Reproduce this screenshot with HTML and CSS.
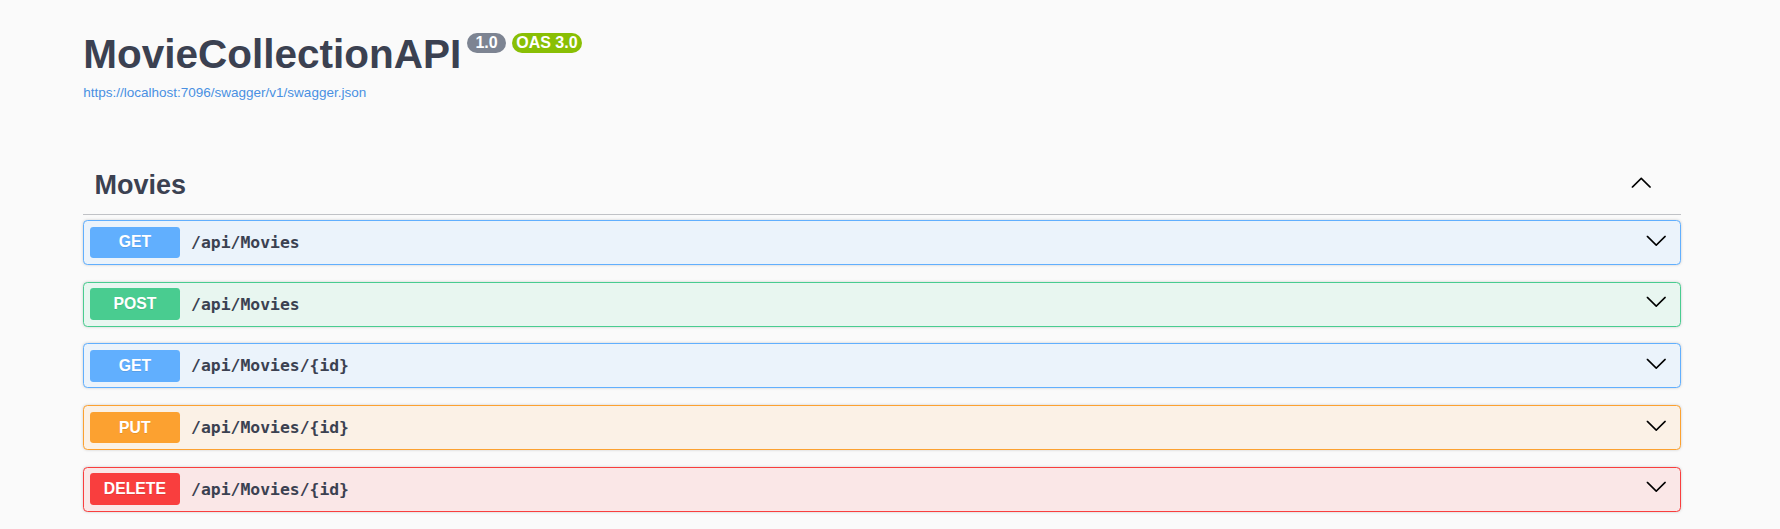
FILE: index.html
```html
<!DOCTYPE html>
<html lang="en">
<head>
<meta charset="utf-8">
<title>MovieCollectionAPI</title>
<link rel="stylesheet" href="styles.css">
</head>
<body>
<div class="page">
  <div class="wrapper">
    <section class="info">
      <div class="title-row">
        <h1 class="title">MovieCollectionAPI</h1>
        <span class="pill pill-version">1.0</span>
        <span class="pill pill-oas">OAS 3.0</span>
      </div>
      <a class="url" href="#">https://localhost:7096/swagger/v1/swagger.json</a>
    </section>

    <section class="tag-section">
      <div class="tag-row">
        <h3 class="tag-name">Movies</h3>
        <svg class="tag-arrow" viewBox="0 0 20 20" aria-hidden="true"><path transform="rotate(180 10 10)" d="M17.418 6.109c.272-.268.709-.268.979 0s.271.701 0 .969l-7.908 7.83c-.27.268-.707.268-.979 0l-7.908-7.83c-.27-.268-.27-.701 0-.969.271-.268.709-.268.979 0L10 13.25l7.418-7.141z"/></svg>
      </div>

      <div class="opblock op-get">
        <div class="summary">
          <span class="method">GET</span>
          <span class="path">/api/Movies</span>
          <svg class="op-arrow" viewBox="0 0 20 20" aria-hidden="true"><path d="M17.418 6.109c.272-.268.709-.268.979 0s.271.701 0 .969l-7.908 7.83c-.27.268-.707.268-.979 0l-7.908-7.830c-.27-.268-.27-.701 0-.969.271-.268.709-.268.979 0L10 13.25l7.418-7.141z"/></svg>
        </div>
      </div>

      <div class="opblock op-post">
        <div class="summary">
          <span class="method">POST</span>
          <span class="path">/api/Movies</span>
          <svg class="op-arrow" viewBox="0 0 20 20" aria-hidden="true"><path d="M17.418 6.109c.272-.268.709-.268.979 0s.271.701 0 .969l-7.908 7.83c-.27.268-.707.268-.979 0l-7.908-7.83c-.27-.268-.27-.701 0-.969.271-.268.709-.268.979 0L10 13.25l7.418-7.141z"/></svg>
        </div>
      </div>

      <div class="opblock op-get">
        <div class="summary">
          <span class="method">GET</span>
          <span class="path">/api/Movies/{id}</span>
          <svg class="op-arrow" viewBox="0 0 20 20" aria-hidden="true"><path d="M17.418 6.109c.272-.268.709-.268.979 0s.271.701 0 .969l-7.908 7.83c-.27.268-.707.268-.979 0l-7.908-7.83c-.27-.268-.27-.701 0-.969.271-.268.709-.268.979 0L10 13.25l7.418-7.141z"/></svg>
        </div>
      </div>

      <div class="opblock op-put">
        <div class="summary">
          <span class="method">PUT</span>
          <span class="path">/api/Movies/{id}</span>
          <svg class="op-arrow" viewBox="0 0 20 20" aria-hidden="true"><path d="M17.418 6.109c.272-.268.709-.268.979 0s.271.701 0 .969l-7.908 7.83c-.27.268-.707.268-.979 0l-7.908-7.83c-.27-.268-.27-.701 0-.969.271-.268.709-.268.979 0L10 13.25l7.418-7.141z"/></svg>
        </div>
      </div>

      <div class="opblock op-delete">
        <div class="summary">
          <span class="method">DELETE</span>
          <span class="path">/api/Movies/{id}</span>
          <svg class="op-arrow" viewBox="0 0 20 20" aria-hidden="true"><path d="M17.418 6.109c.272-.268.709-.268.979 0s.271.701 0 .969l-7.908 7.83c-.27.268-.707.268-.979 0l-7.908-7.83c-.27-.268-.27-.701 0-.969.271-.268.709-.268.979 0L10 13.25l7.418-7.141z"/></svg>
        </div>
      </div>
    </section>
  </div>
</div>
</body>
</html>
```

FILE: styles.css
```css
html, body {
  margin: 0;
  padding: 0;
  background: #fafafa;
}

body {
  font-family: "Liberation Sans", Arial, sans-serif;
  color: #3b4151;
}

.page {
  padding-right: 16px;
}

.wrapper {
  box-sizing: border-box;
  max-width: 1642.5px;
  margin: 0 auto;
  padding: 0 22.5px;
}

.info {
  padding-top: 32px;
}

.title-row {
  display: flex;
  align-items: flex-start;
}

.title {
  margin: 0;
  font-size: 40.5px;
  line-height: 45px;
  font-weight: 700;
  color: #3b4151;
}

.pill {
  margin-top: 1px;
  margin-left: 5.6px;
  padding: 1px 4.5px;
  border-radius: 57px;
  font-size: 16px;
  line-height: 18px;
  font-weight: 700;
  color: #fff;
  white-space: nowrap;
}

.pill-version {
  padding: 1px 8.5px;
  background: #7d8492;
}

.pill-oas {
  background: #89bf04;
}

.url {
  display: block;
  margin-top: 8px;
  font-size: 13.5px;
  line-height: 15px;
  color: #4990e2;
  text-decoration: none;
}

.tag-section {
  margin-top: 57.5px;
}

.tag-row {
  display: flex;
  align-items: center;
  padding: 11px 22.5px 13px 11.25px;
  margin-bottom: 5.6px;
  border-bottom: 1px solid rgba(59, 65, 81, 0.3);
}

.tag-name {
  flex: 1;
  margin: 0;
  font-size: 27px;
  line-height: 32px;
  font-weight: 700;
  color: #3b4151;
}

.tag-arrow {
  width: 22.5px;
  height: 22.5px;
  margin-right: 5.6px;
  margin-bottom: 2px;
  fill: #000;
}

.opblock {
  margin-bottom: 16.9px;
  border: 1px solid;
  border-radius: 4.5px;
  box-shadow: 0 0 3px rgba(0, 0, 0, 0.19);
}

.summary {
  display: flex;
  align-items: center;
  padding: 5.6px;
}

.method {
  min-width: 90px;
  padding: 6.8px 0;
  border-radius: 3.4px;
  font-size: 15.75px;
  line-height: 18px;
  font-weight: 700;
  text-align: center;
  color: #fff;
  text-shadow: 0 1px 0 rgba(0, 0, 0, 0.1);
}

.path {
  flex: 1;
  padding: 0 11.25px;
  font-family: "DejaVu Sans Mono", "Liberation Mono", monospace;
  font-size: 16.4px;
  font-weight: 700;
  color: #3b4151;
}

.op-arrow {
  width: 22.5px;
  height: 22.5px;
  margin-right: 7px;
  margin-bottom: 5px;
  fill: #000;
}

.op-get {
  background: #ebf3fb;
  border-color: #61affe;
}
.op-get .method { background: #61affe; }

.op-post {
  background: #e8f6f0;
  border-color: #49cc90;
}
.op-post .method { background: #49cc90; }

.op-put {
  background: #fbf1e6;
  border-color: #fca130;
}
.op-put .method { background: #fca130; }

.op-delete {
  background: #fae7e7;
  border-color: #f93e3e;
}
.op-delete .method { background: #f93e3e; }
```
